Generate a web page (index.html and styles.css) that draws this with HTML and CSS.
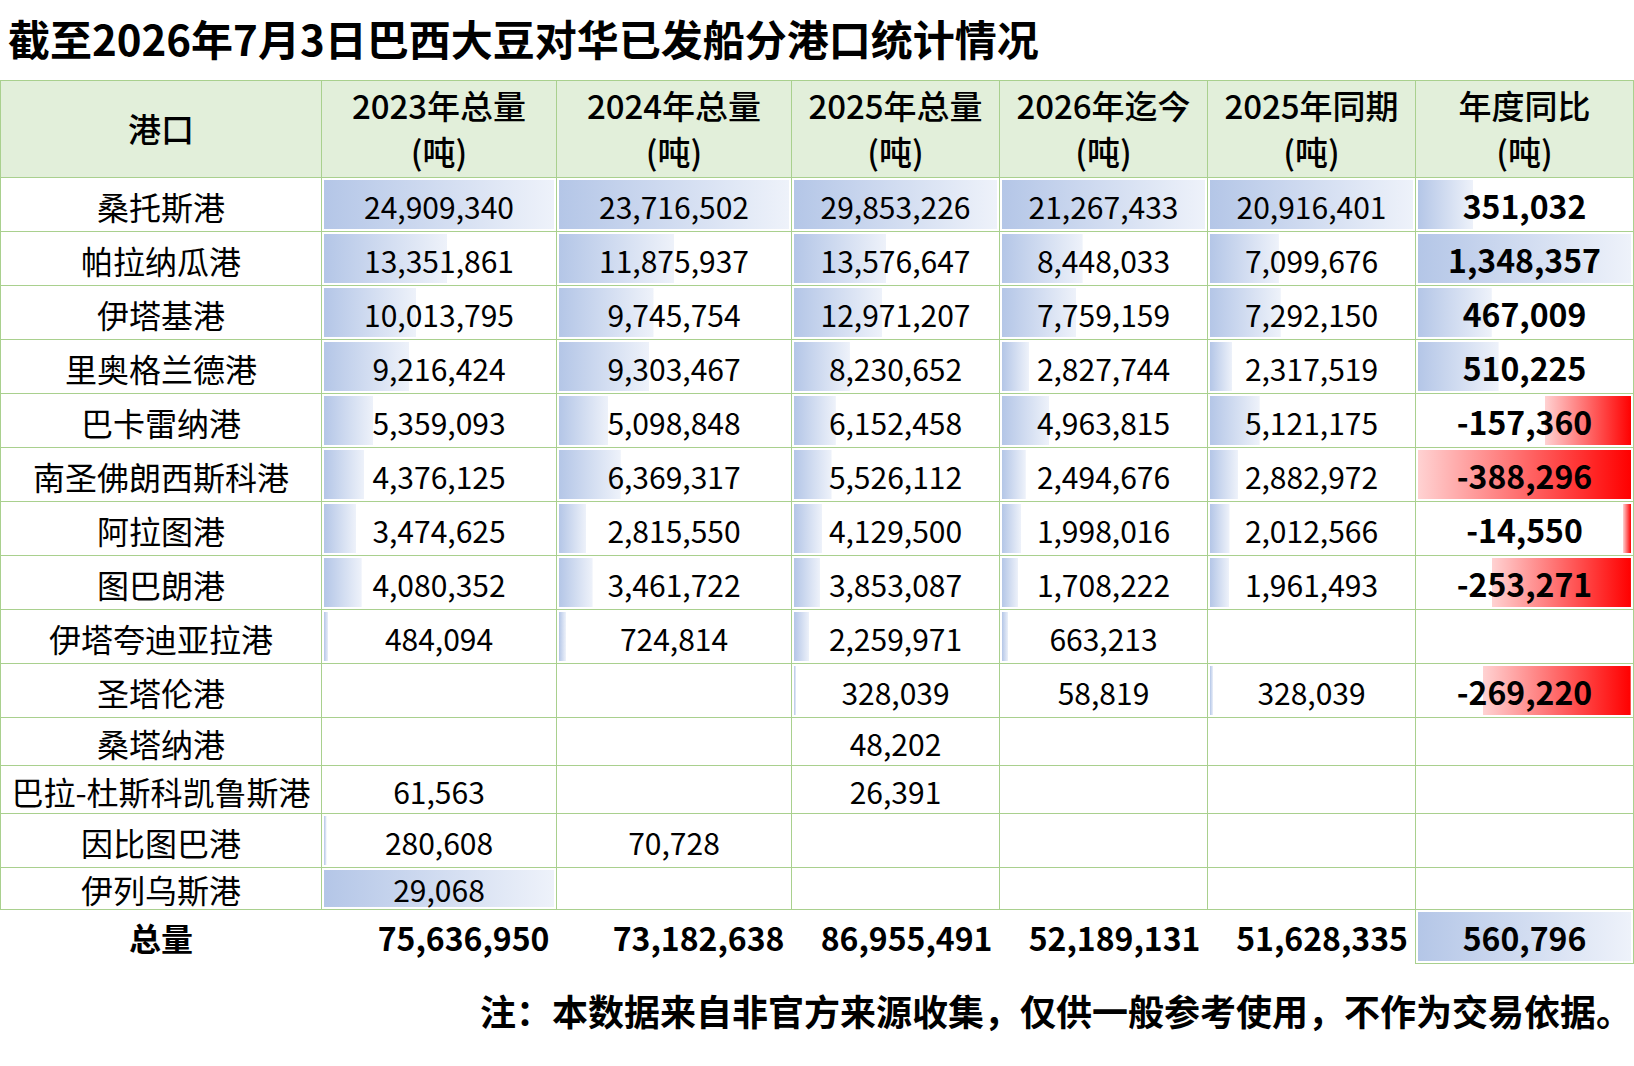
FILE: index.html
```html
<!DOCTYPE html>
<html lang="zh-CN">
<head>
<meta charset="utf-8">
<title>巴西大豆对华已发船分港口统计情况</title>
<link rel="stylesheet" href="styles.css">
</head>
<body>
<div class="page">
  <h1 class="title">截至2026年7月3日巴西大豆对华已发船分港口统计情况</h1>
  <table class="grid">
    <colgroup>
      <col class="c-port"><col class="c-a"><col class="c-a"><col class="c-b"><col class="c-b"><col class="c-b"><col class="c-c">
    </colgroup>
    <thead>
      <tr class="head">
        <th>港口</th>
        <th>2023年总量<br>(吨)</th>
        <th>2024年总量<br>(吨)</th>
        <th>2025年总量<br>(吨)</th>
        <th>2026年迄今<br>(吨)</th>
        <th>2025年同期<br>(吨)</th>
        <th>年度同比<br>(吨)</th>
      </tr>
    </thead>
    <tbody>
      <tr class="r54">
        <td class="port">桑托斯港</td>
        <td class="num bar" style="--w:1">24,909,340</td>
        <td class="num bar" style="--w:1">23,716,502</td>
        <td class="num bar" style="--w:1">29,853,226</td>
        <td class="num bar" style="--w:1">21,267,433</td>
        <td class="num bar" style="--w:1">20,916,401</td>
        <td class="yoy bar" style="--w:0.2603">351,032</td>
      </tr>
      <tr class="r54">
        <td class="port">帕拉纳瓜港</td>
        <td class="num bar" style="--w:0.536">13,351,861</td>
        <td class="num bar" style="--w:0.5007">11,875,937</td>
        <td class="num bar" style="--w:0.4548">13,576,647</td>
        <td class="num bar" style="--w:0.3972">8,448,033</td>
        <td class="num bar" style="--w:0.3394">7,099,676</td>
        <td class="yoy bar" style="--w:1">1,348,357</td>
      </tr>
      <tr class="r54">
        <td class="port">伊塔基港</td>
        <td class="num bar" style="--w:0.402">10,013,795</td>
        <td class="num bar" style="--w:0.4109">9,745,754</td>
        <td class="num bar" style="--w:0.4345">12,971,207</td>
        <td class="num bar" style="--w:0.3648">7,759,159</td>
        <td class="num bar" style="--w:0.3486">7,292,150</td>
        <td class="yoy bar" style="--w:0.3464">467,009</td>
      </tr>
      <tr class="r54">
        <td class="port">里奥格兰德港</td>
        <td class="num bar" style="--w:0.37">9,216,424</td>
        <td class="num bar" style="--w:0.3923">9,303,467</td>
        <td class="num bar" style="--w:0.2757">8,230,652</td>
        <td class="num bar" style="--w:0.133">2,827,744</td>
        <td class="num bar" style="--w:0.1108">2,317,519</td>
        <td class="yoy bar" style="--w:0.3784">510,225</td>
      </tr>
      <tr class="r54">
        <td class="port">巴卡雷纳港</td>
        <td class="num bar" style="--w:0.2151">5,359,093</td>
        <td class="num bar" style="--w:0.215">5,098,848</td>
        <td class="num bar" style="--w:0.2061">6,152,458</td>
        <td class="num bar" style="--w:0.2334">4,963,815</td>
        <td class="num bar" style="--w:0.2448">5,121,175</td>
        <td class="yoy neg" style="--w:0.4053">-157,360</td>
      </tr>
      <tr class="r54">
        <td class="port">南圣佛朗西斯科港</td>
        <td class="num bar" style="--w:0.1757">4,376,125</td>
        <td class="num bar" style="--w:0.2686">6,369,317</td>
        <td class="num bar" style="--w:0.1851">5,526,112</td>
        <td class="num bar" style="--w:0.1173">2,494,676</td>
        <td class="num bar" style="--w:0.1378">2,882,972</td>
        <td class="yoy neg" style="--w:1">-388,296</td>
      </tr>
      <tr class="r54">
        <td class="port">阿拉图港</td>
        <td class="num bar" style="--w:0.1395">3,474,625</td>
        <td class="num bar" style="--w:0.1187">2,815,550</td>
        <td class="num bar" style="--w:0.1383">4,129,500</td>
        <td class="num bar" style="--w:0.0939">1,998,016</td>
        <td class="num bar" style="--w:0.0962">2,012,566</td>
        <td class="yoy neg" style="--w:0.0375">-14,550</td>
      </tr>
      <tr class="r54">
        <td class="port">图巴朗港</td>
        <td class="num bar" style="--w:0.1638">4,080,352</td>
        <td class="num bar" style="--w:0.146">3,461,722</td>
        <td class="num bar" style="--w:0.1291">3,853,087</td>
        <td class="num bar" style="--w:0.0803">1,708,222</td>
        <td class="num bar" style="--w:0.0938">1,961,493</td>
        <td class="yoy neg" style="--w:0.6523">-253,271</td>
      </tr>
      <tr class="r54">
        <td class="port">伊塔夸迪亚拉港</td>
        <td class="num bar" style="--w:0.0194">484,094</td>
        <td class="num bar" style="--w:0.0306">724,814</td>
        <td class="num bar" style="--w:0.0757">2,259,971</td>
        <td class="num bar" style="--w:0.0312">663,213</td>
        <td class="num"></td>
        <td class="yoy"></td>
      </tr>
      <tr class="r54">
        <td class="port">圣塔伦港</td>
        <td class="num"></td>
        <td class="num"></td>
        <td class="num bar" style="--w:0.011">328,039</td>
        <td class="num">58,819</td>
        <td class="num bar" style="--w:0.0157">328,039</td>
        <td class="yoy neg" style="--w:0.6933">-269,220</td>
      </tr>
      <tr class="r48">
        <td class="port">桑塔纳港</td>
        <td class="num"></td>
        <td class="num"></td>
        <td class="num">48,202</td>
        <td class="num"></td>
        <td class="num"></td>
        <td class="yoy"></td>
      </tr>
      <tr class="r48">
        <td class="port">巴拉-杜斯科凯鲁斯港</td>
        <td class="num">61,563</td>
        <td class="num"></td>
        <td class="num">26,391</td>
        <td class="num"></td>
        <td class="num"></td>
        <td class="yoy"></td>
      </tr>
      <tr class="r54">
        <td class="port">因比图巴港</td>
        <td class="num bar" style="--w:0.0113">280,608</td>
        <td class="num">70,728</td>
        <td class="num"></td>
        <td class="num"></td>
        <td class="num"></td>
        <td class="yoy"></td>
      </tr>
      <tr class="r42">
        <td class="port">伊列乌斯港</td>
        <td class="num bar" style="--w:1">29,068</td>
        <td class="num"></td>
        <td class="num"></td>
        <td class="num"></td>
        <td class="num"></td>
        <td class="yoy"></td>
      </tr>
    </tbody>
    <tfoot>
      <tr class="total">
        <td class="t-label">总量</td>
        <td class="t-num">75,636,950</td>
        <td class="t-num">73,182,638</td>
        <td class="t-num">86,955,491</td>
        <td class="t-num">52,189,131</td>
        <td class="t-num">51,628,335</td>
        <td class="t-yoy bar" style="--w:1">560,796</td>
      </tr>
    </tfoot>
  </table>
  <p class="note">注：本数据来自非官方来源收集，仅供一般参考使用，不作为交易依据。</p>
</div>
</body>
</html>
```
FILE: styles.css
```css
* { box-sizing: border-box; }

html, body {
  margin: 0;
  padding: 0;
  background: #ffffff;
}

body {
  font-family: "Noto Sans CJK SC", "Noto Sans", sans-serif;
  color: #000000;
}

.page {
  width: 1634px;
}

.title {
  margin: 0;
  height: 80px;
  padding-left: 8px;
  font-size: 42px;
  font-weight: 700;
  line-height: 76px;
  white-space: nowrap;
}

.grid {
  width: 1633px;
  border-collapse: collapse;
  table-layout: fixed;
}

.c-port { width: 321px; }
.c-a { width: 235px; }
.c-b { width: 208px; }
.c-c { width: 218px; }

.grid th,
.grid td {
  border: 1px solid #a9d08e;
  padding: 0;
  text-align: center;
  vertical-align: middle;
  white-space: nowrap;
}

.head {
  height: 97px;
}

.head th {
  background: #e2efda;
  font-size: 33px;
  font-weight: 500;
  line-height: 46px;
  padding-bottom: 2px;
}

.r54 { height: 54px; }
.r48 { height: 48px; }
.r42 { height: 42px; }

.port {
  font-size: 32px;
  line-height: 40px;
  padding-top: 2px !important;
}

.num {
  font-size: 30px;
  line-height: 40px;
  padding-top: 2px !important;
}

.r42 .port,
.r42 .num {
  line-height: 38px;
  padding-top: 1px !important;
}

.yoy {
  font-size: 32px;
  font-weight: 700;
  line-height: 40px;
}

.bar {
  background-image: linear-gradient(to right, #b4c6e7, #eef2fa);
  background-repeat: no-repeat;
  background-position: 2px 2px;
  background-size: calc((100% - 4px) * var(--w)) calc(100% - 4px);
}

.neg {
  background-image: linear-gradient(to right, #ffd2d2, #ff0000);
  background-repeat: no-repeat;
  background-position: right 2px top 2px;
  background-size: calc((100% - 4px) * var(--w)) calc(100% - 4px);
}

.total {
  height: 54px;
}

.grid .total td {
  border: none;
  font-size: 32px;
  font-weight: 700;
  line-height: 40px;
}

.grid .total .t-label {
  text-align: center;
}

.grid .total .t-num {
  text-align: right;
  padding-right: 7px;
}

.grid .total .t-yoy {
  border: 1px solid #a9d08e;
  text-align: center;
}

.note {
  margin: 20px 0 0 0;
  text-align: right;
  padding-right: 2px;
  font-size: 36px;
  font-weight: 700;
  line-height: 52px;
  white-space: nowrap;
}
```
